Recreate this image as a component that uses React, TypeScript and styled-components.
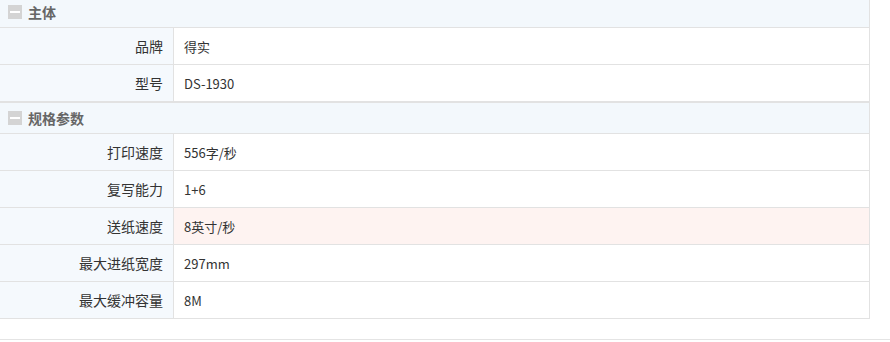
import React from 'react'
import styled, { createGlobalStyle } from 'styled-components'

const GlobalStyle = createGlobalStyle`
html, body {
margin: 0;
padding: 0;
background: #fff;
font-family: "Noto Sans CJK SC", "Noto Sans", sans-serif;
color: #333;
overflow: hidden;
}
`

type Row = { label: string; value: string; hot?: boolean }
type Group = { title: string; rows: Row[] }

const groups: Group[] = [
    {
        title: '主体',
        rows: [
            { label: '品牌', value: '得实' },
            { label: '型号', value: 'DS-1930' },
        ],
    },
    {
        title: '规格参数',
        rows: [
            { label: '打印速度', value: '556字/秒' },
            { label: '复写能力', value: '1+6' },
            { label: '送纸速度', value: '8英寸/秒', hot: true },
            { label: '最大进纸宽度', value: '297mm' },
            { label: '最大缓冲容量', value: '8M' },
        ],
    },
]

const App = () => {
    return (
        <Page>
            <GlobalStyle />
            <Table>
                {groups.map((g) => (
                    <Section key={g.title}>
                        <Head>
                            <Toggle />
                            <Title>{g.title}</Title>
                        </Head>
                        {g.rows.map((r) => (
                            <Line key={r.label}>
                                <Label>{r.label}</Label>
                                <Value $hot={r.hot}>{r.value}</Value>
                            </Line>
                        ))}
                    </Section>
                ))}
            </Table>
            <Footer />
        </Page>
    )
}

export default App

const Page = styled.div`
width: 890px;
margin-top: -3px;
`

const Table = styled.div`
width: 869px;
border-right: 1px solid #e2e2e2;
`

const Section = styled.div`
& + & {
border-top: 1px solid #e2e2e2;
}
`

const Head = styled.div`
height: 30px;
display: flex;
align-items: center;
gap: 6px;
padding-left: 8px;
background-color: #f3f8fc;
border-bottom: 1px solid #e2e2e2;
`

const Toggle = styled.span`
width: 14px;
height: 14px;
background-color: #d4d4d4;
display: flex;
align-items: center;
justify-content: center;
&::after {
content: '';
width: 10px;
height: 2px;
background-color: #fff;
}
`

const Title = styled.span`
font-size: 14px;
font-weight: 700;
color: #666;
`

const Line = styled.div`
display: grid;
grid-template-columns: 174px 1fr;
height: 36px;
border-bottom: 1px solid #e2e2e2;
font-size: 13px;
`

const Label = styled.div`
display: flex;
align-items: center;
justify-content: flex-end;
padding-right: 10px;
font-size: 14px;
background-color: #f5f9fd;
border-right: 1px solid #e2e2e2;
`

const Value = styled.div<{ $hot?: boolean }>`
display: flex;
align-items: center;
padding-left: 10px;
background-color: ${(p) => (p.$hot ? '#fef3f1' : '#fff')};
`

const Footer = styled.div`
margin-top: 20px;
height: 1px;
background-color: #e4e4e4;
`
